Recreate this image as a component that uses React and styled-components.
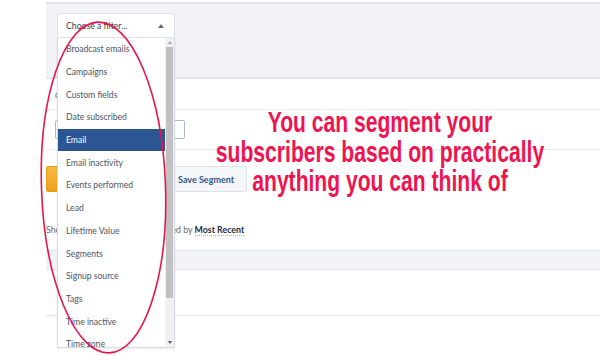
import React from "react";
import styled, { createGlobalStyle } from "styled-components";

const GlobalStyle = createGlobalStyle`
  html, body { margin: 0; padding: 0; background: #fff; overflow: hidden; }
  * { box-sizing: border-box; }
`;

const Page = styled.div`
  position: relative;
  width: 600px;
  height: 356px;
  overflow: hidden;
  background: #fff;
  font-family: Lato, "Open Sans", sans-serif;
`;

const Main = styled.div`
  margin-left: 46px;
  padding-top: 2px;
  width: 600px;
  display: flex;
  flex-direction: column;
`;

const FilterPanel = styled.div`
  background: #f2f3f6;
  border-top: 2px solid #e4e6eb;
  border-bottom: 2px solid #e4e6eb;
  height: 77px;
  padding: 9px 0 0 11px;
`;

const SelectBox = styled.div`
  width: 118px;
  height: 25px;
  background: #fff;
  border: 1px solid #dfe2e8;
  border-radius: 2px 2px 0 0;
  display: flex;
  align-items: center;
  justify-content: space-between;
  padding: 0 10px 0 8px;
  font-size: 8.7px;
  color: #3b3f47;
`;

const Caret = styled.span`
  width: 0;
  height: 0;
  border-left: 3.5px solid transparent;
  border-right: 3.5px solid transparent;
  border-bottom: 4px solid #666;
`;

const LabelRow = styled.div`
  height: 31px;
  padding-left: 9px;
  display: flex;
  align-items: center;
  font-size: 8.7px;
  color: #555;
  border-bottom: 1px solid #e8eaf0;
`;

const InputRow = styled.div`
  height: 40px;
  padding-left: 9px;
  display: flex;
  align-items: center;
  border-bottom: 1px solid #e8eaf0;
`;

const TextInput = styled.div`
  width: 130px;
  height: 19px;
  border: 1px solid #a8b9d8;
  border-radius: 2px;
  background: #fff;
`;

const ButtonRow = styled.div`
  margin-top: 16px;
  height: 26px;
  display: flex;
  gap: 10px;
`;

const Button = styled.div`
  height: 26px;
  width: ${(p) => p.$w}px;
  border-radius: 2px;
  display: flex;
  align-items: center;
  padding-left: 11px;
  font-size: 9px;
  font-weight: 700;
  color: ${(p) => (p.$primary ? "#fff" : "#35578a")};
  background: ${(p) =>
    p.$primary ? "linear-gradient(#f7b944, #f0a21e)" : "#f5f6f8"};
  border: 1px solid ${(p) => (p.$primary ? "#e99a17" : "#e1e4ea")};
`;

const Status = styled.div`
  margin-top: 31px;
  height: 14px;
  line-height: 14px;
  font-size: 8.8px;
  color: #666;
  white-space: nowrap;
`;

const Sort = styled.span`
  font-weight: 700;
  color: #1f2a3a;
  border-bottom: 1px dotted #9fb3d6;
`;

const Band = styled.div`
  margin-top: 13px;
  height: 20px;
  background: #f2f3f6;
  border-top: 1px solid #e4e6eb;
  border-bottom: 1px solid #e4e6eb;
`;

const EmptyRow = styled.div`
  height: 46px;
  border-bottom: 1px solid #dfe2e9;
`;

const Menu = styled.div`
  position: absolute;
  left: 57px;
  top: 38px;
  width: 118px;
  height: 310px;
  background: #fff;
  border: 1px solid #d8dbe2;
  border-top: none;
  display: flex;
  overflow: hidden;
  box-shadow: 0 1px 2px rgba(0, 0, 0, 0.08);
`;

const MenuList = styled.div`
  flex: 1;
  display: flex;
  flex-direction: column;
`;

const MenuItem = styled.div`
  flex: none;
  height: 22.7px;
  display: flex;
  align-items: center;
  padding-left: 8px;
  font-size: 8.6px;
  color: ${(p) => (p.$active ? "#fff" : "#4a5467")};
  background: ${(p) => (p.$active ? "#2c5593" : "transparent")};
  white-space: nowrap;
`;

const Scrollbar = styled.div`
  width: 9px;
  background: #f1f1f1;
  display: flex;
  flex-direction: column;
  align-items: center;
`;

const Arrow = styled.div`
  height: 9px;
  display: flex;
  align-items: center;
  justify-content: center;
  &::after {
    content: "";
    border-left: 2.5px solid transparent;
    border-right: 2.5px solid transparent;
    ${(p) =>
      p.$down ? "border-top: 3px solid #555;" : "border-bottom: 3px solid #a3a3a3;"}
  }
`;

const Thumb = styled.div`
  width: 7px;
  height: 251px;
  background: #c1c1c1;
`;

const Track = styled.div`
  flex: 1;
`;

const Annotation = styled.div`
  position: absolute;
  left: 130px;
  top: 107px;
  width: 500px;
  text-align: center;
  white-space: nowrap;
  font-family: "Liberation Sans", Arial, sans-serif;
  font-weight: 700;
  font-size: 29.5px;
  line-height: 29.5px;
  color: #ef1450;
  transform: scaleX(0.715);
  transform-origin: 250px 0;
`;

const Ellipse = styled.svg`
  position: absolute;
  left: 0;
  top: 0;
  pointer-events: none;
`;

const items = [
  "Broadcast emails",
  "Campaigns",
  "Custom fields",
  "Date subscribed",
  "Email",
  "Email inactivity",
  "Events performed",
  "Lead",
  "Lifetime Value",
  "Segments",
  "Signup source",
  "Tags",
  "Time inactive",
  "Time zone",
];

export default function App() {
  return (
    <Page>
      <GlobalStyle />
      <Main>
        <FilterPanel>
          <SelectBox>
            <span>Choose a filter...</span>
            <Caret />
          </SelectBox>
        </FilterPanel>
        <LabelRow>custom segment name</LabelRow>
        <InputRow>
          <TextInput />
        </InputRow>
        <ButtonRow>
          <Button $primary $w={110}>Update</Button>
          <Button $w={81}>Save Segment</Button>
        </ButtonRow>
        <Status>
          Showing 25 of 538 contacts sorted by <Sort>Most Recent</Sort>
        </Status>
        <Band />
        <EmptyRow />
      </Main>

      <Menu>
        <MenuList>
          {items.map((it) => (
            <MenuItem key={it} $active={it === "Email"}>
              {it}
            </MenuItem>
          ))}
        </MenuList>
        <Scrollbar>
          <Arrow />
          <Thumb />
          <Track />
          <Arrow $down />
        </Scrollbar>
      </Menu>

      <Annotation>
        You can segment your
        <br />
        subscribers based on practically
        <br />
        anything you can think of
      </Annotation>

      <Ellipse width="600" height="356" viewBox="0 0 600 356">
        <ellipse
          cx="103.5"
          cy="187.5"
          rx="62"
          ry="165.5"
          fill="none"
          stroke="#e8144c"
          strokeWidth="1.6"
          transform="rotate(-2 103.5 187.5)"
        />
      </Ellipse>
    </Page>
  );
}
